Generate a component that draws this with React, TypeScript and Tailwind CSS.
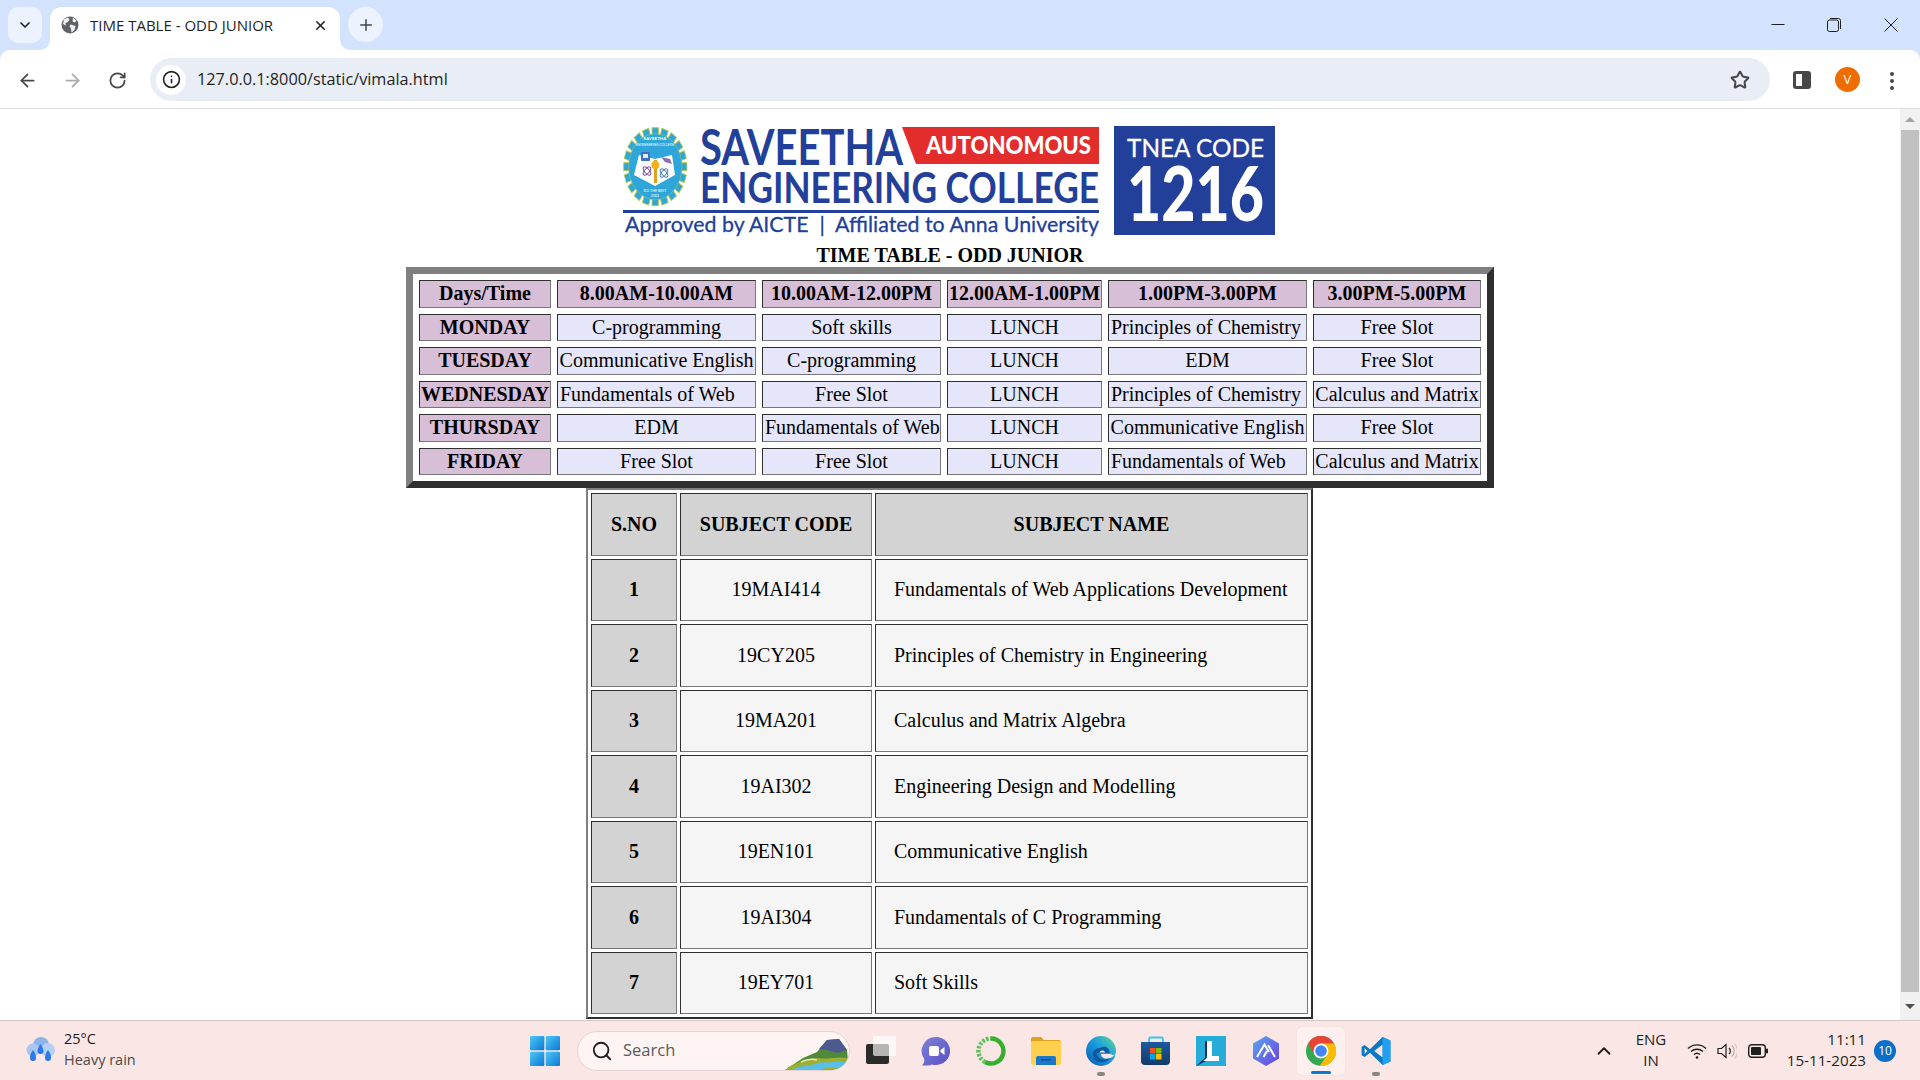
import { ArrowLeft, ArrowRight, ChevronDown, ChevronUp, Info, Plus, RotateCw, Search, Star, X } from "lucide-react";

const serif = "[font-family:'Liberation_Serif',serif]";

const head = ["Days/Time", "8.00AM-10.00AM", "10.00AM-12.00PM", "12.00AM-1.00PM", "1.00PM-3.00PM", "3.00PM-5.00PM"];
const days: [string, string, string, string, string][] = [
  ["MONDAY", "C-programming", "Soft skills", "Principles of Chemistry", "Free Slot"],
  ["TUESDAY", "Communicative English", "C-programming", "EDM", "Free Slot"],
  ["WEDNESDAY", "Fundamentals of Web", "Free Slot", "Principles of Chemistry", "Calculus and Matrix"],
  ["THURSDAY", "EDM", "Fundamentals of Web", "Communicative English", "Free Slot"],
  ["FRIDAY", "Free Slot", "Free Slot", "Fundamentals of Web", "Calculus and Matrix"],
];
const rowH = ["h-[27px]", "h-[28px]", "h-[27px]", "h-[28px]", "h-[27px]"];
const subjects = [
  ["1", "19MAI414", "Fundamentals of Web Applications Development"],
  ["2", "19CY205", "Principles of Chemistry in Engineering"],
  ["3", "19MA201", "Calculus and Matrix Algebra"],
  ["4", "19AI302", "Engineering Design and Modelling"],
  ["5", "19EN101", "Communicative English"],
  ["6", "19AI304", "Fundamentals of C Programming"],
  ["7", "19EY701", "Soft Skills"],
];
const subH = ["h-[62px]", "h-[63px]", "h-[62px]", "h-[63px]", "h-[62px]", "h-[63px]", "h-[62px]"];

const inset = "border border-t-[#2f2f2f] border-l-[#2f2f2f] border-r-[#777777] border-b-[#777777] p-0 pb-[2px]";

function Slot({ text }: { text: string }) {
  const left = text.startsWith("Principles") || text === "Fundamentals of Web";
  return (
    <td className={`${inset} bg-[#e6e6fa] text-[#000] font-normal whitespace-nowrap ${left ? "text-left pl-[2px]" : "text-center"}`}>{text}</td>
  );
}

function Logo() {
  const teeth = Array.from({ length: 20 }, (_, i) => i * 18);
  return (
    <svg width="660" height="114" viewBox="620 125 660 114" className="block shrink-0">
      <g transform="translate(655.3 166.7) scale(0.81 1)">
        {teeth.map((a) => (
          <rect key={a} x="-4" y="-39" width="8" height="10" fill="#2ea6da" stroke="#b9cb4a" strokeWidth="1" transform={`rotate(${a})`} />
        ))}
        <circle r="33" fill="#2ea6da" stroke="#a9c85a" strokeWidth="0.6" />
      </g>
      <polygon points="639,155 655,159 672,155 675,175 655,186 634,175" fill="#ffffff" />
      <rect x="641" y="152" width="9" height="9" rx="1" fill="#3f6fc0" />
      <rect x="643" y="154" width="5" height="4" fill="#dfeaf8" />
      <g fill="none" stroke="#7d4f9e" strokeWidth="1">
        <ellipse cx="647" cy="171" rx="5" ry="2.4" transform="rotate(50 647 171)" />
        <ellipse cx="647" cy="171" rx="5" ry="2.4" transform="rotate(-50 647 171)" />
      </g>
      <g fill="none" stroke="#3f7fc0" strokeWidth="1">
        <ellipse cx="664" cy="173" rx="5" ry="2.4" transform="rotate(50 664 173)" />
        <ellipse cx="664" cy="173" rx="5" ry="2.4" transform="rotate(-50 664 173)" />
      </g>
      <path d="M661 157l9 2 2 5-7-2z" fill="#8a6fb5" />
      <rect x="654" y="160" width="3" height="23" fill="#e0a020" />
      <circle cx="655.3" cy="165" r="4" fill="#f0b020" />
      <text x="655" y="140" textAnchor="middle" fontFamily="Lato" fontSize="4.5" fontWeight="700" fill="#fff">SAVEETHA</text>
      <text x="655" y="146" textAnchor="middle" fontFamily="Lato" fontSize="3.4" fill="#fff">ENGINEERING COLLEGE</text>
      <text x="655" y="192" textAnchor="middle" fontFamily="Lato" fontSize="3.6" fill="#fff">DO THE BEST</text>
      <text x="655" y="197" textAnchor="middle" fontFamily="Lato" fontSize="3.6" fill="#fff">2001</text>

      <text transform="translate(700 165) scale(1 1.28)" fontFamily="Lato" fontSize="39" fontWeight="700" fill="#22409a" textLength="203" lengthAdjust="spacingAndGlyphs">SAVEETHA</text>
      <polygon points="902,127 1099,127 1099,164 916,164" fill="#e32d2d" />
      <text x="926" y="154" fontFamily="Lato" fontSize="24" fontWeight="900" fill="#fff" textLength="165" lengthAdjust="spacingAndGlyphs">AUTONOMOUS</text>
      <text transform="translate(700 203) scale(1 1.3)" fontFamily="Lato" fontSize="33" fontWeight="700" fill="#22409a" textLength="399" lengthAdjust="spacingAndGlyphs">ENGINEERING COLLEGE</text>
      <rect x="623" y="210" width="476" height="3" fill="#22409a" />
      <text transform="translate(625 232) scale(1 1.15)" fontFamily="Lato" fontSize="19" stroke="#22409a" strokeWidth="0.25" fill="#22409a" textLength="474" lengthAdjust="spacingAndGlyphs" className="whitespace-pre">{"Approved by AICTE  |  Affiliated to Anna University"}</text>
      <rect x="1114" y="126" width="161" height="109" fill="#22409a" />
      <text x="1127" y="157" fontFamily="Lato" fontSize="25" fill="#fff" stroke="#fff" strokeWidth="0.3" textLength="137" lengthAdjust="spacingAndGlyphs">TNEA CODE</text>
      <text transform="translate(1127 221) scale(1 1.32)" fontFamily="Lato" fontSize="57" fontWeight="900" fill="#fff" textLength="137" lengthAdjust="spacingAndGlyphs">1216</text>
    </svg>
  );
}

function ChromeLogo() {
  return (
    <svg width="30" height="30" viewBox="0 0 30 30">
      <circle cx="15" cy="15" r="15" fill="#34a853" />
      <path d="M2 7.5A15 15 0 0 1 28 7.5H15L8.5 18.75Z" fill="#ea4335" />
      <path d="M15 7.5H28A15 15 0 0 1 13.5 30L21.5 18.75Z" fill="#fbbc04" />
      <circle cx="15" cy="15" r="7.5" fill="#fff" />
      <circle cx="15" cy="15" r="5.8" fill="#4285f4" />
    </svg>
  );
}

function TabGlobe() {
  return (
    <svg width="18" height="18" viewBox="0 0 18 18" className="shrink-0">
      <circle cx="9" cy="9" r="8.5" fill="#5f6368" />
      <path d="M3 3.5l3.5-2 2 1.5-1 2.5-3 1.5.5 2.5-3-1.5zM12 1.5l3.5 3-1.5 2-2.5-1zM9.5 8.5l5 1.5-1 4-3 2.5-.5-4-1.5-2z" fill="#f3f5f9" />
    </svg>
  );
}

function TaskIcon({ children, dot, active }: { children: React.ReactNode; dot?: boolean; active?: boolean }) {
  return (
    <div className="relative w-[30px] h-[30px] shrink-0">
      {active && <div className="absolute left-[-9px] top-[-9px] w-[48px] h-[48px] rounded-[5px] bg-[#fdf0ee] shadow-[0_0_1px_#d8c8c6]" />}
      <div className="relative">{children}</div>
      {dot && <div className="absolute left-[11px] top-[36px] w-[8px] h-[4px] rounded-full bg-[#8a8583]" />}
      {active && <div className="absolute left-[5px] top-[35px] w-[20px] h-[3px] rounded-full bg-[#0a78d4]" />}
    </div>
  );
}

export default function App() {
  return (
    <div className="w-[1920px] h-[1080px] flex flex-col overflow-hidden bg-white [font-family:'Open_Sans',sans-serif]">
      {/* tab strip */}
      <div className="h-[50px] bg-[#d3e3fd] flex items-start shrink-0 relative">
        <div className="ml-[8px] mt-[7px] w-[34px] h-[36px] rounded-[10px] bg-[#ecf2fe] flex items-center justify-center">
          <ChevronDown size={16} strokeWidth={2.5} className="text-[#202124]" />
        </div>
        <div className="relative ml-[8px] mt-[7px] w-[290px] h-[43px] bg-white rounded-t-[12px] flex items-center pl-[11px] pb-[7px]">
          <svg width="10" height="10" viewBox="0 0 10 10" className="absolute left-[-10px] bottom-0">
            <path d="M10 0V10H0A10 10 0 0 0 10 0Z" fill="#fff" />
          </svg>
          <svg width="10" height="10" viewBox="0 0 10 10" className="absolute right-[-10px] bottom-0">
            <path d="M0 0V10H10A10 10 0 0 1 0 0Z" fill="#fff" />
          </svg>
          <TabGlobe />
          <span className="ml-[11px] text-[15px] text-[#1f1f1f] whitespace-nowrap">TIME TABLE - ODD JUNIOR</span>
          <X size={15} strokeWidth={2.4} className="absolute left-[263px] top-[11px] text-[#1f1f1f]" />
        </div>
        <div className="ml-[8px] mt-[7px] w-[35px] h-[35px] rounded-full bg-[#ecf2fe] flex items-center justify-center">
          <Plus size={18} strokeWidth={2} className="text-[#444746]" />
        </div>
        <div className="ml-auto flex items-center mr-[22px] mt-[18px] gap-[42px]">
          <svg width="14" height="14" viewBox="0 0 14 14"><path d="M0.5 6.5H13.5" stroke="#1f1f1f" strokeWidth="1" /></svg>
          <svg width="14" height="14" viewBox="0 0 14 14" fill="none" stroke="#1f1f1f" strokeWidth="1" className="mr-[1px]">
            <rect x="0.5" y="2" width="11" height="11.5" rx="2" />
            <path d="M3 0.5H11.5A2 2 0 0 1 13.5 2.5V11" />
          </svg>
          <svg width="14" height="14" viewBox="0 0 14 14" stroke="#1f1f1f" strokeWidth="1"><path d="M0.5 0.5L13.5 13.5M13.5 0.5L0.5 13.5" /></svg>
        </div>
      </div>

      {/* toolbar */}
      <div className="h-[59px] shrink-0 bg-[#d3e3fd]">
        <div className="h-[59px] bg-white rounded-t-[10px] border-b border-[#dadce0] flex items-start">
          <div className="mt-[20px] ml-[17px] flex items-center gap-[24px]">
            <ArrowLeft size={21} strokeWidth={2} className="text-[#474747]" />
            <ArrowRight size={21} strokeWidth={2} className="text-[#a9abad]" />
            <RotateCw size={19} strokeWidth={2.2} className="text-[#474747] ml-[1px]" />
          </div>
          <div className="ml-[23px] mt-[8px] w-[1620px] h-[43px] rounded-full bg-[#e9edf6] flex items-center pl-[6px]">
            <div className="w-[30px] h-[30px] rounded-full bg-white flex items-center justify-center shrink-0">
              <Info size={19} strokeWidth={2} className="text-[#1f1f1f]" />
            </div>
            <span className="ml-[11px] text-[16.25px] text-[#1f1f1f] whitespace-nowrap">127.0.0.1:8000/static/vimala.html</span>
            <Star size={20} strokeWidth={2.4} className="ml-auto mr-[20px] text-[#474747]" />
          </div>
          <div className="mt-[21px] ml-[23px] w-[18px] h-[18px] rounded-[3px] bg-[#474747] p-[3px] pr-[9px] shrink-0">
            <div className="w-full h-full bg-white" />
          </div>
          <div className="ml-[24px] mt-[17px] w-[25px] h-[25px] rounded-full bg-[#ef6c00] text-white text-[13px] flex items-center justify-center shrink-0">V</div>
          <div className="ml-[30px] mt-[22px] flex flex-col gap-[3px] shrink-0">
            <div className="w-[4px] h-[4px] rounded-full bg-[#474747]" />
            <div className="w-[4px] h-[4px] rounded-full bg-[#474747]" />
            <div className="w-[4px] h-[4px] rounded-full bg-[#474747]" />
          </div>
        </div>
      </div>

      {/* page + scrollbar */}
      <div className="h-[911px] shrink-0 flex">
        <div className={`w-[1900px] flex flex-col items-center pt-[16px] text-[20px] text-black ${serif}`}>
          <Logo />
          <div className="h-[28px] pt-[5px] font-bold leading-[23px] whitespace-nowrap">TIME TABLE - ODD JUNIOR</div>
          <table className="table-fixed w-[1088px] shrink-0 border-separate border-spacing-[6px] border-[7px] border-t-[#808080] border-l-[#808080] border-r-[#2f2f2f] border-b-[#2f2f2f] leading-[22px]">
            <colgroup>
              <col className="w-[132px]" />
              <col className="w-[199px]" />
              <col className="w-[179px]" />
              <col className="w-[155px]" />
              <col className="w-[199px]" />
              <col className="w-[168px]" />
            </colgroup>
            <tbody>
              <tr className="h-[28px]">
                {head.map((h) => (
                  <th key={h} className={`${inset} bg-[#d8bfd8] font-bold text-center whitespace-nowrap`}>{h}</th>
                ))}
              </tr>
              {days.map((d, i) => (
                <tr key={d[0]} className={rowH[i]}>
                  <th className={`${inset} bg-[#d8bfd8] font-bold text-center whitespace-nowrap`}>{d[0]}</th>
                  <Slot text={d[1]} />
                  <Slot text={d[2]} />
                  <td className={`${inset} bg-[#e6e6fa] text-center font-normal`}>LUNCH</td>
                  <Slot text={d[3]} />
                  <Slot text={d[4]} />
                </tr>
              ))}
            </tbody>
          </table>
          <table className="table-fixed w-[727px] mr-[1px] shrink-0 border-separate border-spacing-[3px] border-2 border-t-[#808080] border-l-[#808080] border-r-[#2f2f2f] border-b-[#2f2f2f] leading-[22px]">
            <colgroup>
              <col className="w-[86px]" />
              <col className="w-[192px]" />
              <col className="w-[433px]" />
            </colgroup>
            <tbody>
              <tr className="h-[63px]">
                <th className={`${inset} bg-[#d3d3d3] font-bold text-center`}>S.NO</th>
                <th className={`${inset} bg-[#d3d3d3] font-bold text-center`}>SUBJECT CODE</th>
                <th className={`${inset} bg-[#d3d3d3] font-bold text-center`}>SUBJECT NAME</th>
              </tr>
              {subjects.map((s, i) => (
                <tr key={s[0]} className={subH[i]}>
                  <th className={`${inset} bg-[#d3d3d3] font-bold text-center`}>{s[0]}</th>
                  <td className={`${inset} bg-[#f5f5f5] text-center`}>{s[1]}</td>
                  <td className={`${inset} bg-[#f5f5f5] text-left pl-[18px]`}>{s[2]}</td>
                </tr>
              ))}
            </tbody>
          </table>
        </div>
        <div className="w-[20px] bg-[#f1f1f1] flex flex-col items-center">
          <div className="h-[21px] flex items-center justify-center shrink-0">
            <div className="w-0 h-0 border-x-[5px] border-x-transparent border-b-[5px] border-b-[#a3a3a3]" />
          </div>
          <div className="w-[18px] h-[862px] bg-[#c1c1c1] shrink-0" />
          <div className="flex-1 flex items-center justify-center">
            <div className="w-0 h-0 border-x-[5px] border-x-transparent border-t-[5px] border-t-[#505050]" />
          </div>
        </div>
      </div>

      {/* taskbar */}
      <div className="h-[60px] shrink-0 bg-[#fae6e5] border-t border-[#d6c6c5] flex items-center">
        <div className="w-[530px] pl-[26px] flex items-center shrink-0">
          <svg width="30" height="28" viewBox="0 0 30 28" className="shrink-0">
            <circle cx="15" cy="8" r="8" fill="#8fb4ea" />
            <circle cx="7" cy="13" r="6.5" fill="#a8c6f0" />
            <circle cx="22" cy="13" r="7" fill="#b6cff2" />
            <path d="M14.5 7c2 3 3 5 3 7a3 3 0 0 1-6 0c0-2 1-4 3-7zM7 13c2 3 3 5 3 8a3 3 0 0 1-6 0c0-3 1-5 3-8zM22 13c2 3 3 5 3 8a3 3 0 0 1-6 0c0-3 1-5 3-8z" fill="#2a78ec" />
          </svg>
          <div className="ml-[8px] mb-[3px] flex flex-col text-[14.5px] leading-[21px]">
            <span className="text-[#1a1a1a]">25°C</span>
            <span className="text-[#4d4a4a]">Heavy rain</span>
          </div>
        </div>
        <svg width="30" height="30" viewBox="0 0 30 30" className="shrink-0">
          <defs>
            <linearGradient id="win" x1="0" y1="0" x2="1" y2="1">
              <stop offset="0" stopColor="#4fc8f7" />
              <stop offset="1" stopColor="#0a78d4" />
            </linearGradient>
          </defs>
          <rect x="0" y="0" width="14.3" height="14.3" rx="1" fill="url(#win)" />
          <rect x="15.7" y="0" width="14.3" height="14.3" rx="1" fill="url(#win)" />
          <rect x="0" y="15.7" width="14.3" height="14.3" rx="1" fill="url(#win)" />
          <rect x="15.7" y="15.7" width="14.3" height="14.3" rx="1" fill="url(#win)" />
        </svg>
        <div className="ml-[17px] w-[273px] h-[40px] rounded-full bg-[#fdf4f3] border border-[#e6d3d1] flex items-center pl-[13px] relative overflow-hidden shrink-0">
          <Search size={22} strokeWidth={2} className="text-[#1f1f1f] shrink-0" />
          <span className="ml-[10px] text-[16.5px] text-[#5c5a5a]">Search</span>
          <svg width="66" height="32" viewBox="0 0 66 32" className="absolute right-0 top-[6px]">
            <path d="M2 32L20 20L34 14L44 2L56 1L64 12L66 32Z" fill="#4f8a3a" />
            <path d="M36 11L44 2L56 1L64 12L54 15L44 12Z" fill="#4d5a8f" />
            <path d="M4 30C14 24 26 20 36 20C44 22 54 18 64 20L66 32H4Z" fill="#9bb030" />
            <path d="M10 31C18 27 30 28 38 24C46 26 54 22 64 24L64 29C52 32 44 28 38 32H10Z" fill="#58c0e8" />
            <path d="M18 24C24 21 30 21 34 22" stroke="#f0e6b8" strokeWidth="1.5" fill="none" />
          </svg>
        </div>
        <div className="ml-[16px] flex items-center gap-[25px] shrink-0">
          <TaskIcon>
            <svg width="30" height="30" viewBox="0 0 30 30">
              <rect x="0" y="8" width="23" height="20" rx="2" fill="#2b2b2b" />
              <rect x="7" y="0" width="23" height="20" rx="2" fill="#ffffff" fillOpacity="0.65" />
            </svg>
          </TaskIcon>
          <TaskIcon>
            <svg width="30" height="30" viewBox="0 0 30 30">
              <defs>
                <linearGradient id="tm" x1="0" y1="0" x2="1" y2="1">
                  <stop offset="0" stopColor="#7b83d8" />
                  <stop offset="1" stopColor="#5b4fc4" />
                </linearGradient>
              </defs>
              <path d="M15 1A14 14 0 1 1 11 28.4C8 29.5 5 29.5 1 29.5C3 27.5 3.5 25.5 3.2 23A14 14 0 0 1 15 1Z" fill="url(#tm)" />
              <rect x="8" y="10" width="10" height="10" rx="2" fill="#fff" />
              <path d="M19.5 14L23.5 11V19L19.5 16Z" fill="#fff" />
            </svg>
          </TaskIcon>
          <TaskIcon>
            <svg width="30" height="30" viewBox="0 0 30 30" fill="none">
              <path d="M15 2.5A12.5 12.5 0 1 1 9 26" stroke="#35b02e" strokeWidth="4.5" />
              <path d="M9 26A12.5 12.5 0 0 1 15 2.5" stroke="#62bf5a" strokeWidth="4.5" strokeDasharray="2.5 1.5" />
            </svg>
          </TaskIcon>
          <TaskIcon>
            <svg width="30" height="30" viewBox="0 0 30 30">
              <path d="M0 3a2 2 0 0 1 2-2h8l3 3h15a2 2 0 0 1 2 2v6H0z" fill="#e0a21a" />
              <rect x="0" y="5" width="30" height="24" rx="2" fill="#ffcf4d" />
              <path d="M5 22a2 2 0 0 1 2-2h16a2 2 0 0 1 2 2v7H5z" fill="#1b78c8" />
              <rect x="10" y="23" width="10" height="1.5" fill="#0d4f8f" />
            </svg>
          </TaskIcon>
          <TaskIcon dot>
            <svg width="30" height="30" viewBox="0 0 30 30">
              <defs>
                <linearGradient id="ed" x1="0" y1="1" x2="1" y2="0">
                  <stop offset="0" stopColor="#0c59a4" />
                  <stop offset="0.55" stopColor="#1b9de2" />
                  <stop offset="1" stopColor="#5fdc8a" />
                </linearGradient>
              </defs>
              <circle cx="15" cy="15" r="15" fill="url(#ed)" />
              <path d="M14 12C19 9 24 12 23.5 17H11C11 21 15 24 20 23.5L25 21.5C21 28 8 29 7 19C6.5 15 10 12 14 12Z" fill="#0c59a4" />
              <path d="M13.5 16.5C14 14 18 13.5 19.5 16.5Z" fill="#fae6e5" />
              <path d="M30 17C30 21 27 18.5 23.5 18H15C15 21 18 23 22 22.5C25 22.5 28 20 30 17Z" fill="#fae6e5" />
            </svg>
          </TaskIcon>
          <TaskIcon>
            <svg width="30" height="30" viewBox="0 0 30 30">
              <defs>
                <linearGradient id="st" x1="0" y1="0" x2="0" y2="1">
                  <stop offset="0" stopColor="#1d5aa0" />
                  <stop offset="1" stopColor="#123a68" />
                </linearGradient>
              </defs>
              <path d="M8 6V3a1.5 1.5 0 0 1 1.5-1.5h11A1.5 1.5 0 0 1 22 3v3" stroke="#36c3f0" strokeWidth="1.8" fill="none" />
              <path d="M0 6h29v19a4 4 0 0 1-4 4H4a4 4 0 0 1-4-4z" fill="url(#st)" />
              <rect x="9" y="12" width="5.5" height="5.5" fill="#f25022" />
              <rect x="15" y="12" width="5.5" height="5.5" fill="#7fba00" />
              <rect x="9" y="18" width="5.5" height="5.5" fill="#00a4ef" />
              <rect x="15" y="18" width="5.5" height="5.5" fill="#ffb900" />
            </svg>
          </TaskIcon>
          <TaskIcon>
            <svg width="30" height="30" viewBox="0 0 30 30">
              <rect width="30" height="30" fill="#25acd9" />
              <path d="M0 30L9 22V5H13L10 25Z" fill="#0e2a6d" />
              <path d="M11 5H16V20H23V25H7L11 22Z" fill="#ffffff" />
            </svg>
          </TaskIcon>
          <TaskIcon>
            <svg width="30" height="30" viewBox="0 0 30 30">
              <defs>
                <linearGradient id="hx" x1="0" y1="0" x2="1" y2="1">
                  <stop offset="0" stopColor="#58a8f0" />
                  <stop offset="1" stopColor="#6d3ee0" />
                </linearGradient>
              </defs>
              <path d="M15 0L28 7.5V22.5L15 30L2 22.5V7.5Z" fill="url(#hx)" />
              <path d="M6 21L13.5 8.5L18 16M12.5 21L16 15M17 9L24 21" stroke="#fff" strokeWidth="2" fill="none" />
            </svg>
          </TaskIcon>
          <TaskIcon active>
            <ChromeLogo />
          </TaskIcon>
          <TaskIcon dot>
            <svg width="30" height="30" viewBox="0 0 100 100">
              <path d="M72 3L30 44L12 30L2 36V64L12 70L30 56L72 97L98 85V15Z" fill="#0a78c4" />
              <path d="M72 28L44 50L72 72Z" fill="#fae6e5" />
              <path d="M12 40L21 50L12 60Z" fill="#fae6e5" />
              <path d="M72 3L98 15V85L72 97Z" fill="#20a0f0" />
            </svg>
          </TaskIcon>
        </div>
        <div className="ml-auto pr-[24px] flex items-center shrink-0">
          <ChevronUp size={22} strokeWidth={2} className="text-[#1f1f1f] shrink-0" />
          <div className="ml-[16px] mb-[1px] w-[40px] text-center text-[15px] leading-[21px] text-[#1f1f1f]">
            <div>ENG</div>
            <div>IN</div>
          </div>
          <svg width="20" height="20" viewBox="0 0 20 20" fill="none" stroke="#1f1f1f" strokeWidth="1.4" className="ml-[16px] shrink-0">
            <path d="M1 7.5A13 13 0 0 1 19 7.5M4 10.5A9 9 0 0 1 16 10.5M7 13.5A4.5 4.5 0 0 1 13 13.5" />
            <circle cx="10" cy="16.5" r="1.3" fill="#1f1f1f" stroke="none" />
          </svg>
          <svg width="20" height="20" viewBox="0 0 20 20" fill="none" stroke="#1f1f1f" strokeWidth="1.2" className="ml-[10px] shrink-0">
            <path d="M1 7.5H4.5L9 3.5V16.5L4.5 12.5H1Z" />
            <path d="M12 7A4 4 0 0 1 12 13" />
            <path d="M15 4.5A8 8 0 0 1 15 15.5" stroke="#b9aeae" />
            <path d="M17.5 2.5A11 11 0 0 1 17.5 17.5" stroke="#d8cccc" />
          </svg>
          <svg width="20" height="14" viewBox="0 0 20 14" className="ml-[11px] shrink-0">
            <rect x="0.7" y="0.7" width="16.6" height="12.6" rx="3" fill="none" stroke="#1f1f1f" strokeWidth="1.4" />
            <rect x="3" y="3" width="10" height="8" rx="1" fill="#1f1f1f" />
            <rect x="18" y="4.5" width="2" height="5" rx="1" fill="#1f1f1f" />
          </svg>
          <div className="w-[98px] mb-[1px] text-right text-[15.2px] leading-[21px] text-[#1f1f1f]">
            <div>11:11</div>
            <div>15-11-2023</div>
          </div>
          <div className="ml-[8px] w-[22px] h-[22px] rounded-full bg-[#0b6fc9] text-white text-[12px] flex items-center justify-center shrink-0">10</div>
        </div>
      </div>
    </div>
  );
}
